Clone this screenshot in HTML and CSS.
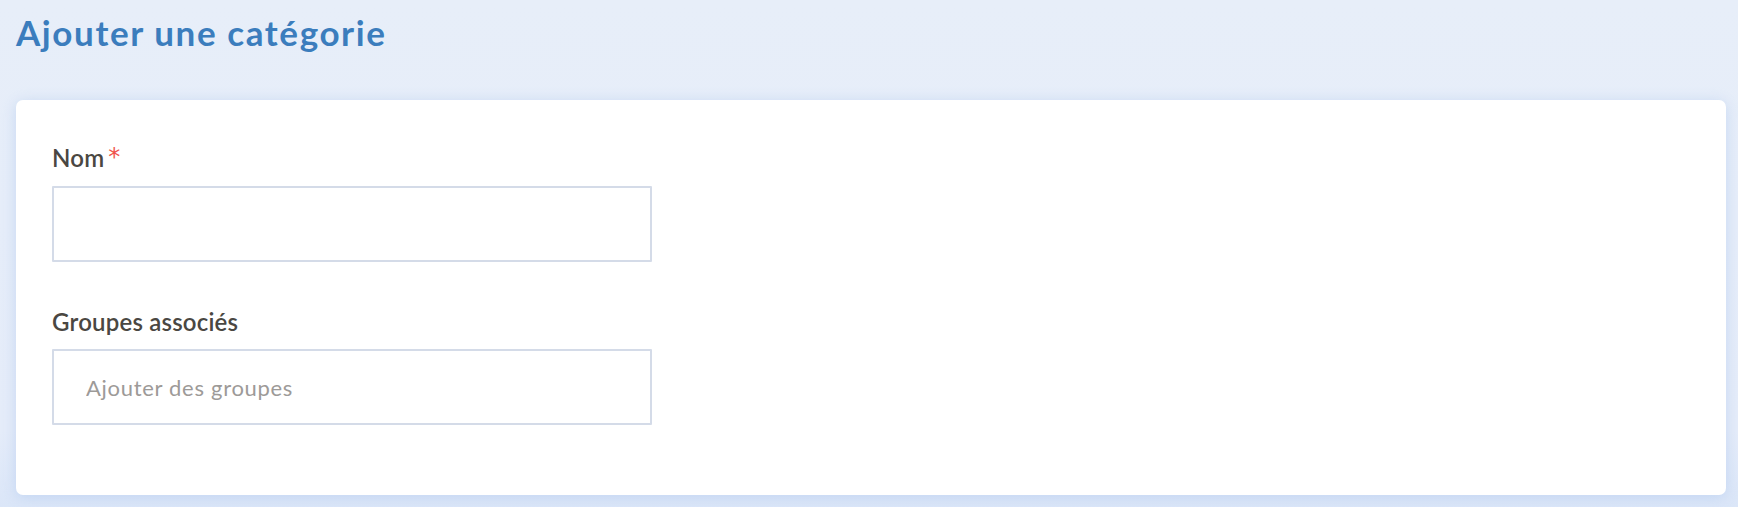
FILE: index.html
```html
<!DOCTYPE html>
<html lang="fr">
<head>
<meta charset="utf-8">
<title>Ajouter une catégorie</title>
<link rel="stylesheet" href="styles.css">
</head>
<body>
<main class="page">
  <h1 class="page-title">Ajouter une catégorie</h1>
  <section class="card">
    <form class="form">
      <div class="field">
        <label class="field-label" for="nom">Nom<span class="required">*</span></label>
        <input class="field-input" id="nom" type="text">
      </div>
      <div class="field">
        <label class="field-label" for="groupes">Groupes associés</label>
        <input class="field-input" id="groupes" type="text" placeholder="Ajouter des groupes">
      </div>
    </form>
  </section>
</main>
</body>
</html>
```
FILE: styles.css
```css
* { box-sizing: border-box; }
html, body {
  margin: 0;
  height: 100%;
}
body {
  background: linear-gradient(#e7eef9 0%, #e5ecf9 85%, #dbe6f8 100%);
  font-family: Lato, "Noto Sans", sans-serif;
}
.page {
  padding: 11px 12px 0 16px;
}
.page-title {
  margin: 0 0 46px 0;
  font-size: 35px;
  line-height: 43px;
  font-weight: 700;
  letter-spacing: 1.6px;
  color: #3b7dbd;
}
.card {
  background: #fff;
  border-radius: 7px;
  box-shadow: 0 2px 14px rgba(160, 190, 235, 0.45);
  padding: 43px 36px 70px 36px;
}
.form {
  display: flex;
  flex-direction: column;
  gap: 45px;
}
.field {
  display: flex;
  flex-direction: column;
  gap: 12px;
}
.field-label {
  font-size: 24px;
  line-height: 30px;
  font-weight: 600;
  letter-spacing: 0.2px;
  color: #4a4742;
}
.required {
  color: #f0524d;
  margin-left: 4px;
  font-weight: 400;
  font-family: "DejaVu Sans", sans-serif;
  font-size: 24px;
  position: relative;
  top: -2px;
}
.field-input {
  width: 600px;
  height: 76px;
  border: 2px solid #d4dbe8;
  border-radius: 1px;
  padding: 0 32px;
  font-family: Lato, "Noto Sans", sans-serif;
  font-size: 22px;
  letter-spacing: 0.7px;
  color: #4a4742;
  background: #fff;
  outline: none;
}
.field-input::placeholder {
  color: #9d9a98;
}
```
